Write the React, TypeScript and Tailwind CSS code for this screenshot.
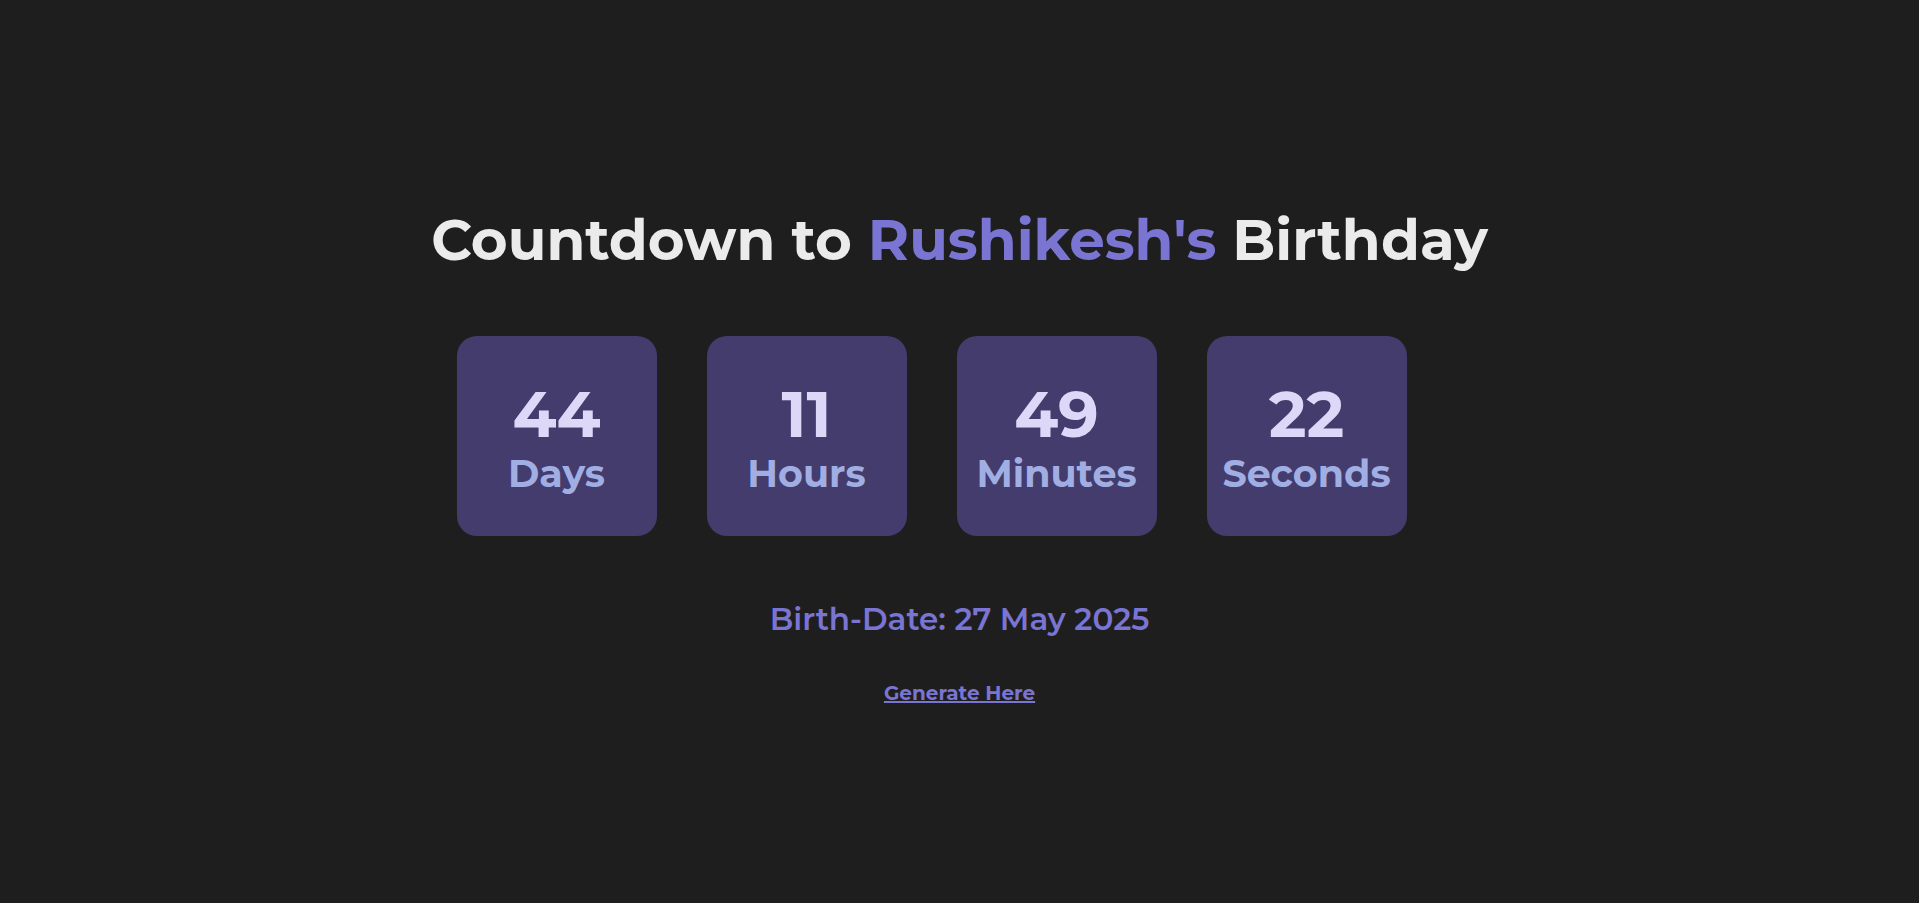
const units = [
  { value: "44", label: "Days" },
  { value: "11", label: "Hours" },
  { value: "49", label: "Minutes" },
  { value: "22", label: "Seconds" },
];

const App = () => {
  return (
    <div className="min-h-screen w-full bg-[#1e1e1e] font-['Montserrat','Open_Sans',sans-serif] flex flex-col items-center pt-[196px]">
      <h1 className="text-[56.3px] leading-[88px] font-bold text-[#ebebeb]">
        Countdown to <span className="text-[#7a75d3]">Rushikesh's</span> Birthday
      </h1>

      {/* Timer boxes */}
      <div className="w-full flex justify-center gap-[50px] pr-[56px] mt-[52px]">
        {units.map((u) => (
          <div
            key={u.label}
            className="w-[200px] h-[200px] rounded-[20px] bg-[#433c6c] flex flex-col items-center justify-center pt-[8px]"
          >
            <span className="text-[64px] leading-[64px] font-bold text-[#ddd8f8]">{u.value}</span>
            <span className="mt-[4px] text-[38px] leading-[48px] font-bold text-[#a1aee3]">{u.label}</span>
          </div>
        ))}
      </div>

      <p className="mt-[63px] text-[31px] leading-[40px] font-semibold text-[#7a75d3]">Birth-Date: 27 May 2025</p>

      <a href="#" className="mt-[39px] text-[20px] font-bold text-[#7a75d3] underline">
        Generate Here
      </a>
    </div>
  );
};

export default App;
